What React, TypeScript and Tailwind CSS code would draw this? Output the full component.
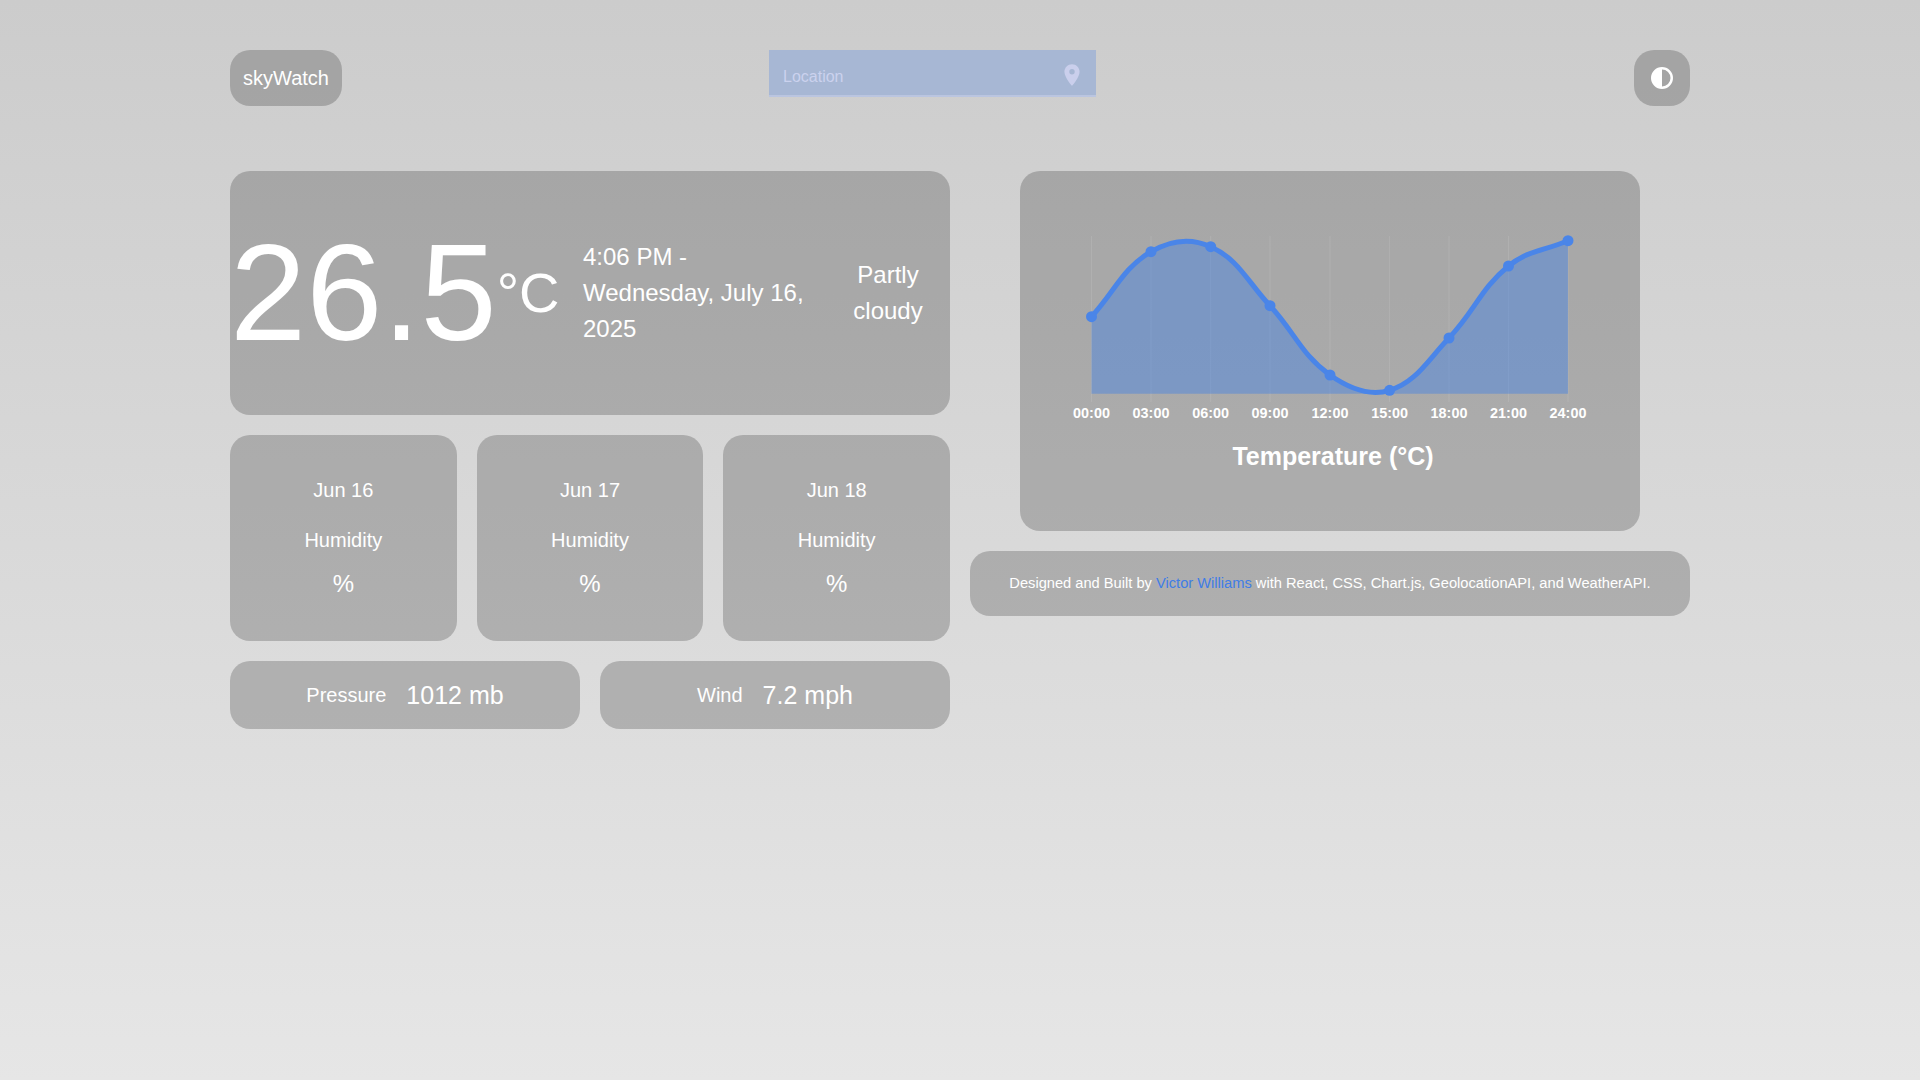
import React from "react";

const X = [91.5, 151, 210.7, 270, 330, 389.6, 449, 508.5, 568].map((v) => v + 1000 - 1020);
const Y = [316.7, 251.7, 246.7, 305.7, 375, 390.3, 338, 266, 240.7].map((v) => v - 171);
const LABELS = ["00:00", "03:00", "06:00", "09:00", "12:00", "15:00", "18:00", "21:00", "24:00"];
const BASE = 393.7 - 171;

function buildCurve(): string {
  const t = 0.4;
  const n = X.length;
  const cp: { px: number; py: number; nx: number; ny: number }[] = [];
  for (let i = 0; i < n; i++) {
    const pi = Math.max(i - 1, 0);
    const ni = Math.min(i + 1, n - 1);
    const d01 = Math.hypot(X[i] - X[pi], Y[i] - Y[pi]);
    const d12 = Math.hypot(X[ni] - X[i], Y[ni] - Y[i]);
    const s01 = d01 / (d01 + d12);
    const s12 = d12 / (d01 + d12);
    cp.push({
      px: X[i] - t * s01 * (X[ni] - X[pi]),
      py: Y[i] - t * s01 * (Y[ni] - Y[pi]),
      nx: X[i] + t * s12 * (X[ni] - X[pi]),
      ny: Y[i] + t * s12 * (Y[ni] - Y[pi]),
    });
  }
  let d = `M${X[0]} ${Y[0]}`;
  for (let i = 1; i < n; i++) {
    d += ` C${cp[i - 1].nx} ${cp[i - 1].ny} ${cp[i].px} ${cp[i].py} ${X[i]} ${Y[i]}`;
  }
  return d;
}

const CURVE = buildCurve();

function Chart() {
  return (
    <svg width="620" height="360" viewBox="0 0 620 360" className="block">
      {X.map((x) => (
        <line key={x} x1={x} x2={x} y1={65} y2={231} stroke="rgba(255,255,255,0.1)" strokeWidth="1" />
      ))}
      <path d={`${CURVE} L${X[8]} ${BASE} L${X[0]} ${BASE} Z`} fill="rgba(55,125,235,0.4)" />
      <path d={CURVE} fill="none" stroke="#4a85e8" strokeWidth="5" />
      {X.map((x, i) => (
        <circle key={x} cx={x} cy={Y[i]} r="5.5" fill="#4a85e8" />
      ))}
      {X.map((x, i) => (
        <text
          key={x}
          x={x}
          y={247}
          textAnchor="middle"
          fill="#ffffff"
          fontSize="14.4"
          fontWeight="700"
          fontFamily="'Liberation Sans', Arial, sans-serif"
        >
          {LABELS[i]}
        </text>
      ))}
      <text
        x={313}
        y={294}
        textAnchor="middle"
        fill="#ffffff"
        fontSize="25"
        fontWeight="700"
        fontFamily="'Liberation Sans', Arial, sans-serif"
      >
        Temperature (°C)
      </text>
    </svg>
  );
}

function Forecast({ date }: { date: string }) {
  return (
    <div className="flex flex-col items-center justify-center rounded-[20px] bg-black/20 h-[206px]">
      <div className="text-[20px] leading-[30px] mb-5">{date}</div>
      <div className="text-[20px] leading-[30px] mb-[11px]">Humidity</div>
      <div className="text-[24px] leading-[36px]">%</div>
    </div>
  );
}

function Stat({ label, value }: { label: string; value: string }) {
  return (
    <div className="flex items-center justify-center gap-5 rounded-[20px] bg-black/20 h-[68px]">
      <span className="text-[20px] leading-[30px]">{label}</span>
      <span className="text-[25px] leading-[38px]">{value}</span>
    </div>
  );
}

export default function App() {
  return (
    <div className="min-h-screen w-full bg-gradient-to-b from-[#cccccc] to-[#e6e6e6] text-white font-['Liberation_Sans',Arial,sans-serif]">
      <div className="mx-auto w-[1460px] pt-[50px]">
        <header className="flex items-start h-[56px]">
          <div className="flex items-center justify-center w-[112px] h-[56px] rounded-[20px] bg-black/20 text-[20px]">
            skyWatch
          </div>
          <div className="ml-[427px] flex items-center w-[327px] h-[47px] bg-[#a7b7d4] border-b-2 border-[#bac5e0]">
            <input
              placeholder="Location"
              className="flex-1 min-w-0 pl-[14px] pt-[9px] bg-transparent text-[16px] leading-[24px] outline-none placeholder:text-[#cbd2ee]"
            />
            <svg width="26" height="26" viewBox="0 0 24 24" className="mr-[11px] mt-[5px] shrink-0" fill="#cacfec">
              <path d="M12 2C8.13 2 5 5.13 5 9c0 5.25 7 13 7 13s7-7.75 7-13c0-3.87-3.13-7-7-7zm0 9.5a2.5 2.5 0 010-5 2.5 2.5 0 010 5z" />
            </svg>
          </div>
          <button className="ml-auto flex items-center justify-center w-[56px] h-[56px] rounded-[20px] bg-black/20">
            <svg width="22" height="22" viewBox="0 0 22 22">
              <circle cx="11" cy="11" r="9.75" fill="none" stroke="#ffffff" strokeWidth="2.5" />
              <path d="M11 1a10 10 0 000 20z" fill="#ffffff" />
            </svg>
          </button>
        </header>

        <main className="mt-[65px] grid grid-cols-2 gap-5 items-start">
          <div className="flex flex-col gap-5">
            <section className="flex items-center h-[244px] rounded-[20px] bg-black/20">
              <div className="flex items-center w-[353px] shrink-0">
                <span className="text-[137px] leading-[150px]">26.5</span>
                <span className="text-[56px] leading-[84px]">°C</span>
              </div>
              <div className="w-[243px] pr-[15px] shrink-0 text-[24px] leading-[36px]">
                4:06 PM - Wednesday, July 16, 2025
              </div>
              <div className="w-[124px] shrink-0 text-center text-[24px] leading-[36px]">Partly cloudy</div>
            </section>
            <div className="grid grid-cols-3 gap-5">
              <Forecast date="Jun 16" />
              <Forecast date="Jun 17" />
              <Forecast date="Jun 18" />
            </div>
            <div className="grid grid-cols-2 gap-5">
              <Stat label="Pressure" value="1012 mb" />
              <Stat label="Wind" value="7.2 mph" />
            </div>
          </div>
          <div className="flex flex-col gap-5">
            <section className="mx-[50px] h-[360px] rounded-[20px] bg-black/20">
              <Chart />
            </section>
            <footer className="flex items-center justify-center h-[65px] pb-[2px] rounded-[20px] bg-black/20 text-[14.667px]">
              <p>
                Designed and Built by <a className="text-[#3f7de6]">Victor Williams</a> with React, CSS, Chart.js,
                GeolocationAPI, and WeatherAPI.
              </p>
            </footer>
          </div>
        </main>
      </div>
    </div>
  );
}
